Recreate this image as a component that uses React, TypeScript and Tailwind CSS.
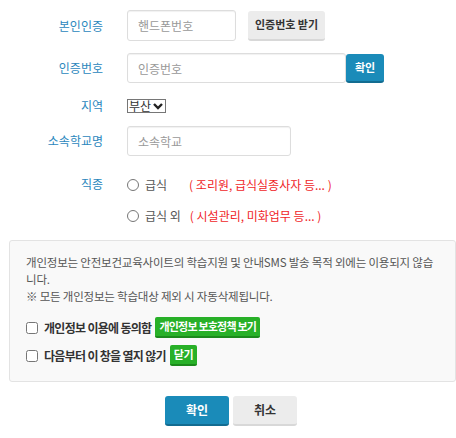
import React, { useState } from 'react'

const font = { fontFamily: '"Noto Sans CJK KR", "Noto Sans", sans-serif' }

function Label({ children }: { children: React.ReactNode }) {
  return <div className="w-[103px] shrink-0 text-right text-[12px] text-[#2b87bd]">{children}</div>
}

function Radio({ checked, onClick }: { checked: boolean; onClick: () => void }) {
  return (
    <span
      onClick={onClick}
      className="inline-flex h-[12px] w-[12px] shrink-0 items-center justify-center rounded-full border border-[#767676] bg-white"
    >
      {checked && <span className="h-[6px] w-[6px] rounded-full bg-[#333]" />}
    </span>
  )
}

export default function App() {
  const [job, setJob] = useState('')
  const [agree, setAgree] = useState(false)
  const [hide, setHide] = useState(false)

  return (
    <div className="h-[438px] w-[456px] bg-white text-[#333]" style={font}>
      <div className="pt-[10px]">
        {/* 본인인증 */}
        <div className="flex items-center">
          <Label>본인인증</Label>
          <input
            placeholder="핸드폰번호"
            className="ml-[24px] h-[31px] w-[109px] rounded-[3px] border border-[#ddd] px-[10px] text-[12px] shadow-[inset_0_1px_1px_rgba(0,0,0,0.06)] outline-none placeholder:text-[#999]"
          />
          <button className="ml-[12px] h-[30px] w-[77px] rounded-[3px] border-b-2 border-[#d8d8d8] bg-[#ececec] text-[11px] font-bold text-[#333]">
            인증번호 받기
          </button>
        </div>

        {/* 인증번호 */}
        <div className="mt-[12px] flex items-center">
          <Label>인증번호</Label>
          <input
            placeholder="인증번호"
            className="ml-[24px] h-[30px] w-[219px] rounded-[3px] border border-[#ddd] px-[10px] text-[12px] shadow-[inset_0_1px_1px_rgba(0,0,0,0.06)] outline-none placeholder:text-[#999]"
          />
          <button className="h-[29px] w-[38px] rounded-[3px] border-b-2 border-[#126c91] bg-[#1a8bb9] text-[11px] font-bold text-white">
            확인
          </button>
        </div>

        {/* 지역 */}
        <div className="mt-[14px] flex items-center">
          <Label>지역</Label>
          <div className="ml-[24px] flex h-[14px] items-center border border-[#767676] px-[1px] text-[12px] leading-none text-[#333]">
            <span>부산</span>
            <svg width="12" height="12" viewBox="0 0 12 12" className="ml-[1px]">
              <path d="M2 4l4 4 4-4" fill="none" stroke="#222" strokeWidth="2.4" />
            </svg>
          </div>
        </div>

        {/* 소속학교명 */}
        <div className="mt-[11px] flex items-center">
          <Label>소속학교명</Label>
          <input
            placeholder="소속학교"
            className="ml-[24px] h-[30px] w-[164px] rounded-[3px] border border-[#ddd] px-[10px] text-[12px] shadow-[inset_0_1px_1px_rgba(0,0,0,0.06)] outline-none placeholder:text-[#999]"
          />
        </div>

        {/* 직종 */}
        <div className="mt-[19px] flex">
          <Label>직종</Label>
          <div className="ml-[24px] text-[12px]">
            <div className="flex h-[20px] items-center whitespace-nowrap">
              <Radio checked={job === 'a'} onClick={() => setJob('a')} />
              <span className="ml-[6px] text-[#555]">급식</span>
              <span className="ml-[22px] text-[#f01e28]">( 조리원, 급식실종사자 등... )</span>
            </div>
            <div className="mt-[11px] flex h-[20px] items-center whitespace-nowrap">
              <Radio checked={job === 'b'} onClick={() => setJob('b')} />
              <span className="ml-[6px] text-[#555]">급식 외</span>
              <span className="ml-[9px] text-[#f01e28]">( 시설관리, 미화업무 등... )</span>
            </div>
          </div>
        </div>
      </div>

      {/* 개인정보 안내 */}
      <div className="ml-[9px] mt-[14px] h-[142px] w-[447px] rounded-[3px] border border-[#e3e3e3] bg-[#f9f9f9] px-[16px] pt-[13px]">
        <p className="text-[11.5px] leading-[17px] tracking-[-0.2px] text-[#555]">
          <span className="whitespace-nowrap">
            개인정보는 안전보건교육사이트의 학습지원 및 안내SMS 발송 목적 외에는 이용되지 않습
          </span>
          <br />
          니다.
          <br />※ 모든 개인정보는 학습대상 제외 시 자동삭제됩니다.
        </p>
        <div className="mt-[12px] flex items-center text-[12px] font-bold tracking-[-0.7px] text-[#333]">
          <input
            type="checkbox"
            checked={agree}
            onChange={() => setAgree(!agree)}
            className="m-0 h-[12px] w-[12px]"
          />
          <span className="ml-[6px]">개인정보 이용에 동의함</span>
          <button className="ml-[4px] h-[21px] rounded-[2px] border-b-2 border-[#1c8a1c] bg-[#28b028] px-[4px] text-[11px] font-bold tracking-[-0.8px] text-white">
            개인정보 보호정책 보기
          </button>
        </div>
        <div className="mt-[7px] flex items-center text-[12px] font-bold tracking-[-0.7px] text-[#333]">
          <input
            type="checkbox"
            checked={hide}
            onChange={() => setHide(!hide)}
            className="m-0 h-[12px] w-[12px]"
          />
          <span className="ml-[6px]">다음부터 이 창을 열지 않기</span>
          <button className="ml-[4px] h-[21px] rounded-[2px] border-b-2 border-[#1c8a1c] bg-[#28b028] px-[4px] text-[11px] font-bold tracking-[-0.4px] text-white">
            닫기
          </button>
        </div>
      </div>

      {/* 하단 버튼 */}
      <div className="mt-[14px] flex justify-center gap-[4px] pl-[6px]">
        <button className="h-[30px] w-[64px] rounded-[3px] border-b-2 border-[#126c91] bg-[#1a8bb9] text-[12px] font-bold text-white">
          확인
        </button>
        <button className="h-[30px] w-[64px] rounded-[3px] border-b-2 border-[#d8d8d8] bg-[#ececec] text-[12px] font-bold text-[#333]">
          취소
        </button>
      </div>
    </div>
  )
}
